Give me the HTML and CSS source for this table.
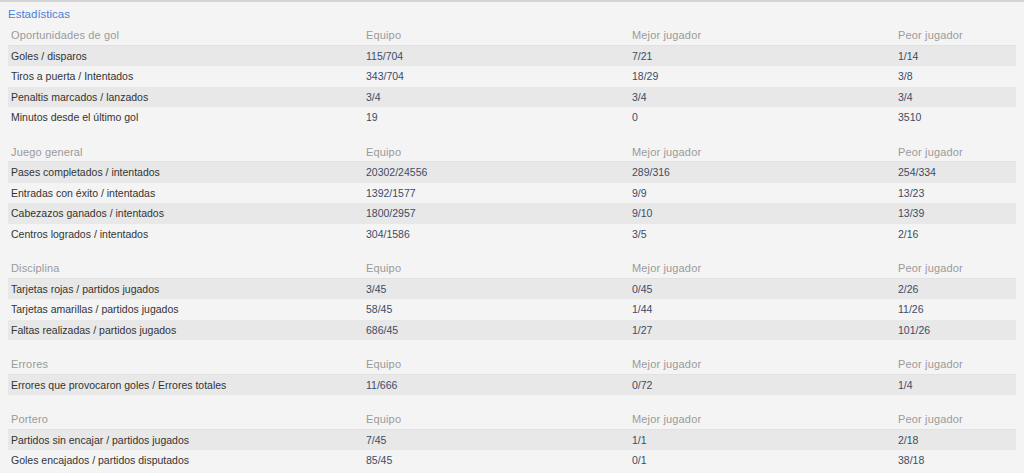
FILE: index.html
```html
<!DOCTYPE html>
<html lang="es">
<head>
<meta charset="utf-8">
<title>Estadísticas</title>
<link rel="stylesheet" href="styles.css">
</head>
<body>
<div class="panel">
  <h2 class="title">Estadísticas</h2>

  <section class="group">
    <div class="row head"><span>Oportunidades de gol</span><span>Equipo</span><span>Mejor jugador</span><span>Peor jugador</span></div>
    <div class="row odd"><span>Goles / disparos</span><span class="v">115/704</span><span class="v">7/21</span><span class="v">1/14</span></div>
    <div class="row"><span>Tiros a puerta / Intentados</span><span class="v">343/704</span><span class="v">18/29</span><span class="v">3/8</span></div>
    <div class="row odd"><span>Penaltis marcados / lanzados</span><span class="v">3/4</span><span class="v">3/4</span><span class="v">3/4</span></div>
    <div class="row"><span>Minutos desde el último gol</span><span class="v">19</span><span class="v">0</span><span class="v">3510</span></div>
  </section>

  <section class="group">
    <div class="row head"><span>Juego general</span><span>Equipo</span><span>Mejor jugador</span><span>Peor jugador</span></div>
    <div class="row odd"><span>Pases completados / intentados</span><span class="v">20302/24556</span><span class="v">289/316</span><span class="v">254/334</span></div>
    <div class="row"><span>Entradas con éxito / intentadas</span><span class="v">1392/1577</span><span class="v">9/9</span><span class="v">13/23</span></div>
    <div class="row odd"><span>Cabezazos ganados / intentados</span><span class="v">1800/2957</span><span class="v">9/10</span><span class="v">13/39</span></div>
    <div class="row"><span>Centros logrados / intentados</span><span class="v">304/1586</span><span class="v">3/5</span><span class="v">2/16</span></div>
  </section>

  <section class="group">
    <div class="row head"><span>Disciplina</span><span>Equipo</span><span>Mejor jugador</span><span>Peor jugador</span></div>
    <div class="row odd"><span>Tarjetas rojas / partidos jugados</span><span class="v">3/45</span><span class="v">0/45</span><span class="v">2/26</span></div>
    <div class="row"><span>Tarjetas amarillas / partidos jugados</span><span class="v">58/45</span><span class="v">1/44</span><span class="v">11/26</span></div>
    <div class="row odd"><span>Faltas realizadas / partidos jugados</span><span class="v">686/45</span><span class="v">1/27</span><span class="v">101/26</span></div>
  </section>

  <section class="group">
    <div class="row head"><span>Errores</span><span>Equipo</span><span>Mejor jugador</span><span>Peor jugador</span></div>
    <div class="row odd"><span>Errores que provocaron goles / Errores totales</span><span class="v">11/666</span><span class="v">0/72</span><span class="v">1/4</span></div>
  </section>

  <section class="group">
    <div class="row head"><span>Portero</span><span>Equipo</span><span>Mejor jugador</span><span>Peor jugador</span></div>
    <div class="row odd"><span>Partidos sin encajar / partidos jugados</span><span class="v">7/45</span><span class="v">1/1</span><span class="v">2/18</span></div>
    <div class="row"><span>Goles encajados / partidos disputados</span><span class="v">85/45</span><span class="v">0/1</span><span class="v">38/18</span></div>
  </section>
</div>
</body>
</html>
```

FILE: styles.css
```css
html, body {
  margin: 0;
  padding: 0;
  background: #f4f4f4;
}

body {
  font-family: "Liberation Sans", Arial, sans-serif;
  color: #333;
  overflow: hidden;
}

.panel {
  border-top: 2px solid #d4d4d4;
  padding: 0 8px;
}

.title {
  margin: 0;
  height: 23px;
  line-height: 25px;
  font-size: 11.5px;
  font-weight: normal;
  color: #4a82d6;
}

.group {
  margin-bottom: 14px;
}

.row {
  display: grid;
  grid-template-columns: 355fr 266fr 266fr 121fr;
  height: 20.5px;
  align-items: center;
  font-size: 10.5px;
}

.row > span {
  padding-left: 3px;
  white-space: nowrap;
}

.row.head {
  font-size: 11px;
  color: #9a9a9a;
  letter-spacing: 0.15px;
  box-shadow: inset 0 -1px 0 #e2e2e2;
}

.row.odd {
  background: #e8e8e8;
}

.v {
  color: #3d4b66;
}
```
